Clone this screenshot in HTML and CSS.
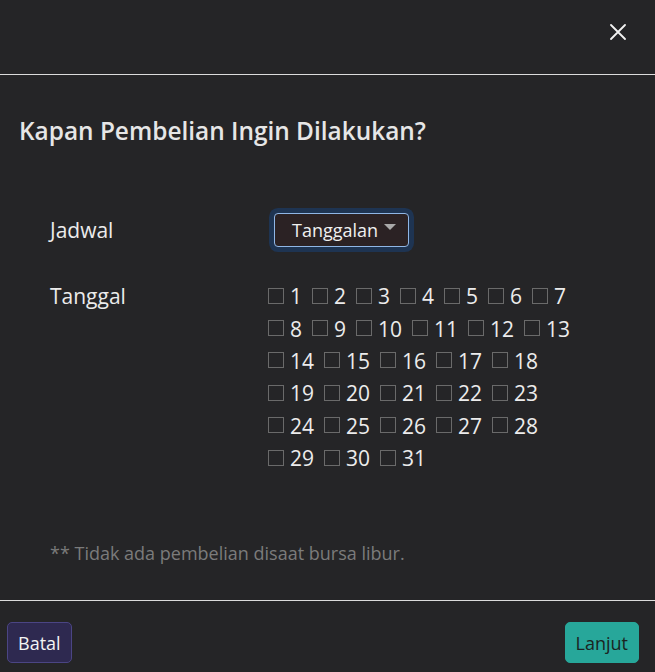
FILE: index.html
```html
<!DOCTYPE html>
<html lang="id">
<head>
<meta charset="utf-8">
<title>Kapan Pembelian Ingin Dilakukan?</title>
<link rel="stylesheet" href="styles.css">
</head>
<body>
<div class="modal">
  <header class="modal-header">
    <button class="close" type="button" aria-label="Tutup">
      <svg width="16" height="16" viewBox="0 0 16 16"><path d="M1 1L15 15M15 1L1 15" stroke="#f2f2f2" stroke-width="1.8" stroke-linecap="round" fill="none"/></svg>
    </button>
  </header>
  <main class="modal-body">
    <h1 class="title">Kapan Pembelian Ingin Dilakukan?</h1>
    <div class="form">
      <div class="row row-jadwal">
        <div class="label">Jadwal</div>
        <div class="value">
          <div class="select">
            <span>Tanggalan</span>
            <svg class="caret" width="12" height="6" viewBox="0 0 12 6"><path d="M0 0H12L6 6Z" fill="#a9a9a9"/></svg>
          </div>
        </div>
      </div>
      <div class="row row-tanggal">
        <div class="label">Tanggal</div>
        <div class="value">
          <div class="days">
            <label class="day"><input type="checkbox"><span>1</span></label>
            <label class="day"><input type="checkbox"><span>2</span></label>
            <label class="day"><input type="checkbox"><span>3</span></label>
            <label class="day"><input type="checkbox"><span>4</span></label>
            <label class="day"><input type="checkbox"><span>5</span></label>
            <label class="day"><input type="checkbox"><span>6</span></label>
            <label class="day"><input type="checkbox"><span>7</span></label>
            <label class="day"><input type="checkbox"><span>8</span></label>
            <label class="day"><input type="checkbox"><span>9</span></label>
            <label class="day wide"><input type="checkbox"><span>10</span></label>
            <label class="day wide"><input type="checkbox"><span>11</span></label>
            <label class="day wide"><input type="checkbox"><span>12</span></label>
            <label class="day wide"><input type="checkbox"><span>13</span></label>
            <label class="day wide"><input type="checkbox"><span>14</span></label>
            <label class="day wide"><input type="checkbox"><span>15</span></label>
            <label class="day wide"><input type="checkbox"><span>16</span></label>
            <label class="day wide"><input type="checkbox"><span>17</span></label>
            <label class="day wide"><input type="checkbox"><span>18</span></label>
            <label class="day wide"><input type="checkbox"><span>19</span></label>
            <label class="day wide"><input type="checkbox"><span>20</span></label>
            <label class="day wide"><input type="checkbox"><span>21</span></label>
            <label class="day wide"><input type="checkbox"><span>22</span></label>
            <label class="day wide"><input type="checkbox"><span>23</span></label>
            <label class="day wide"><input type="checkbox"><span>24</span></label>
            <label class="day wide"><input type="checkbox"><span>25</span></label>
            <label class="day wide"><input type="checkbox"><span>26</span></label>
            <label class="day wide"><input type="checkbox"><span>27</span></label>
            <label class="day wide"><input type="checkbox"><span>28</span></label>
            <label class="day wide"><input type="checkbox"><span>29</span></label>
            <label class="day wide"><input type="checkbox"><span>30</span></label>
            <label class="day wide"><input type="checkbox"><span>31</span></label>
          </div>
        </div>
      </div>
    </div>
    <p class="note">** Tidak ada pembelian disaat bursa libur.</p>
  </main>
  <footer class="modal-footer">
    <button class="btn btn-cancel" type="button">Batal</button>
    <button class="btn btn-next" type="button">Lanjut</button>
  </footer>
</div>
</body>
</html>
```
FILE: styles.css
```css
* { box-sizing: border-box; }
html, body { margin: 0; padding: 0; }
body {
  background: #252527;
  font-family: "Open Sans", "Noto Sans", "DejaVu Sans", sans-serif;
  color: #ececec;
}
.modal {
  width: 655px;
  height: 672px;
  display: flex;
  flex-direction: column;
  background: #252527;
}
.modal-header {
  height: 75px;
  flex: none;
  border-bottom: 1px solid #dcdcdc;
  display: flex;
  justify-content: flex-end;
  align-items: flex-start;
  padding: 24px 29px 0 0;
}
.close {
  background: none;
  border: 0;
  padding: 0;
  width: 16px;
  height: 16px;
  cursor: pointer;
  display: block;
}
.close svg { display: block; }
.modal-body {
  flex: none;
  height: 526px;
  padding: 41px 19px 0;
  border-bottom: 1px solid #dcdcdc;
}
.title {
  margin: 0;
  font-size: 24.4px;
  line-height: 30px;
  font-weight: 600;
  color: #e6e6e6;
}
.form {
  margin-top: 67px;
  padding-left: 31px;
}
.row {
  display: flex;
  align-items: flex-start;
}
.label {
  width: 218px;
  flex: none;
  font-size: 21px;
  color: #ececec;
}
.row-jadwal .label { line-height: 34px; }
.row-tanggal { margin-top: 33px; }
.row-tanggal .label { line-height: 32.4px; }
.select {
  margin-left: 6px;
  width: 135px;
  height: 34px;
  border: 1px solid #8fb6e6;
  border-radius: 4px;
  background: #2b2224;
  box-shadow: 0 0 0 5px #1e3452;
  display: flex;
  align-items: center;
  padding-left: 17px;
  font-size: 18px;
  color: #f0f0f0;
}
.caret { margin-left: 6px; margin-top: -7px; }
.days {
  width: 320px;
  display: flex;
  flex-wrap: wrap;
}
.day {
  width: 44px;
  height: 32.4px;
  display: flex;
  align-items: center;
  font-size: 21px;
  color: #ececec;
}
.day.wide { width: 56px; }
.day input {
  appearance: none;
  -webkit-appearance: none;
  margin: -1px 6px 0 0;
  width: 16px;
  height: 16px;
  border: 1px solid #6a6a6a;
  border-radius: 0;
  background: transparent;
  flex: none;
}
.note {
  margin: 67px 0 0 31px;
  font-size: 18px;
  line-height: 24px;
  color: #7b7b7b;
}
.modal-footer {
  flex: 1;
  display: flex;
  justify-content: space-between;
  align-items: flex-start;
  padding: 21px 16px 0 7px;
}
.btn {
  height: 41px;
  border-radius: 5px;
  font-family: inherit;
  font-size: 18px;
  padding: 0 10px;
  cursor: pointer;
}
.btn-cancel {
  background: #2e2950;
  border: 1px solid #4b4584;
  color: #f4f4f4;
}
.btn-next {
  background: #27a79a;
  border: 1px solid #27a79a;
  color: #1b2422;
}
```
